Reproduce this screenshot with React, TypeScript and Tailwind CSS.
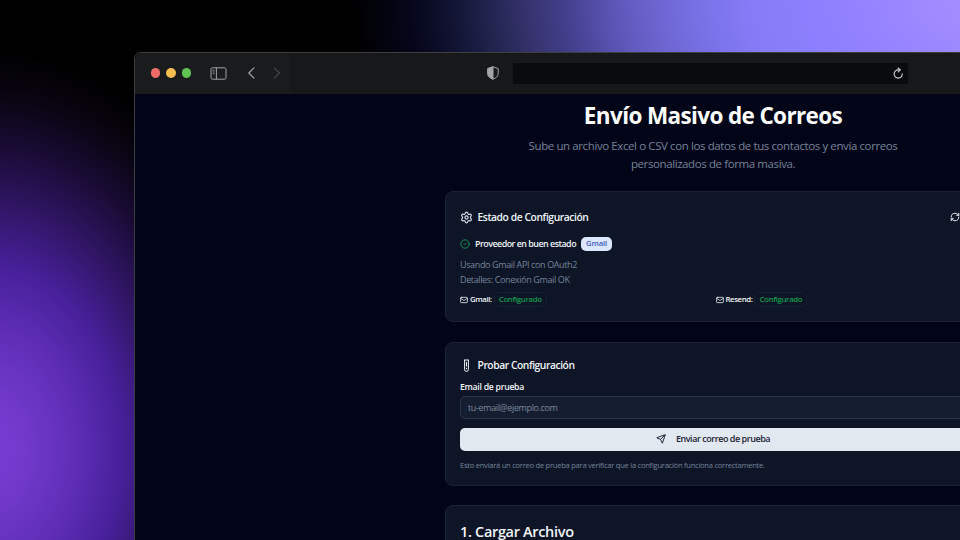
import { Settings, CircleCheck, Mail, Send, RefreshCw } from "lucide-react";
import type { ReactNode } from "react";

function Toolbar() {
  return (
    <header className="flex h-[41px] shrink-0 items-center bg-[#161819] pb-[1px] text-[#a3a6a8]">
      <div className="-mb-[1px] flex h-[41px] w-[156px] items-center bg-[#191b1d] pb-[1px] pl-[15.500px]">
        <div className="flex gap-[6px]">
          <span className="size-[9.500px] rounded-full bg-[#ed6a66]" />
          <span className="size-[9.500px] rounded-full bg-[#f5be50]" />
          <span className="size-[9.500px] rounded-full bg-[#61c454]" />
        </div>
        <svg className="ml-[19px]" width="17" height="13" viewBox="0 0 17 13" fill="none" stroke="currentColor">
          <rect x="1" y="0.8" width="15" height="11.4" rx="1.6" />
          <path d="M6.4 1v11" />
          <path d="M2.6 3.2h2M2.6 5h2M2.6 6.8h2" strokeWidth="0.8" />
        </svg>
        <svg className="ml-[19.500px]" width="9" height="12" viewBox="0 0 9 12" fill="none" stroke="currentColor" strokeWidth="1.2" strokeLinecap="round" strokeLinejoin="round">
          <path d="M7 .8 1.800 6 7 11.200" />
        </svg>
        <svg className="ml-[17px] text-[#46494b]" width="9" height="12" viewBox="0 0 9 12" fill="none" stroke="currentColor" strokeWidth="1.2" strokeLinecap="round" strokeLinejoin="round">
          <path d="m1.200.8 5.200 5.200-5.200 5.200" />
        </svg>
      </div>
      <svg className="ml-[196px]" width="12" height="14" viewBox="0 0 12 14" fill="none" stroke="currentColor">
        <path d="M6 .8 11.200 2.600v4.800c0 3-2.300 4.600-5.200 5.800C3.100 12 .8 10.400.8 7.400V2.600Z" />
        <path d="M6 .8v12.400C3.100 12 .8 10.400.8 7.400V2.600Z" fill="currentColor" />
      </svg>
      <div className="ml-[14px] flex h-[21px] w-[395px] items-center justify-end bg-[#090b0c] pr-[4px] text-[#d0d2d3]">
        <svg width="12" height="12" viewBox="0 0 12 12" fill="none" stroke="currentColor" strokeWidth="1.1" strokeLinecap="round" strokeLinejoin="round">
          <path d="M10.300 6.800A4.100 4.100 0 1 1 6.500 2.900h1.600" />
          <path d="M6.200 1 8.200 2.900 6.200 4.900" />
        </svg>
      </div>
    </header>
  );
}

function Card({ className, children }: { className: string; children: ReactNode }) {
  return (
    <section className={`w-[536px] shrink-0 rounded-[8px] border border-[#1b2436] bg-[#0d1526] px-[14px] ${className}`}>
      {children}
    </section>
  );
}

function ProviderStatus({ name }: { name: string }) {
  return (
    <div className="flex w-[255.500px] shrink-0 items-center">
      <Mail size={8} strokeWidth={2.300} />
      <span className="ml-[2px] text-[7.800px] font-semibold tracking-[-0.400px] whitespace-nowrap">{name}</span>
      <span className="ml-[2px] flex h-[15px] w-[53px] items-center justify-center rounded-[5px] border border-[#152033] text-[7.800px] font-semibold tracking-[-0.330px] text-[#139b4c]">
        Configurado
      </span>
    </div>
  );
}

export default function App() {
  return (
    <div className="h-[540px] w-[960px] overflow-hidden bg-black bg-[radial-gradient(ellipse_285px_400px_at_-10px_450px,#783ed4_0%,#7139ca_13%,#5e2eb6_30%,#47209a_46%,#2f1562_62%,#190b34_76%,#0a0513_88%,transparent_100%),radial-gradient(ellipse_650px_400px_at_1000px_0px,#a78fff_0%,#a08aff_10%,#8f80ff_26%,#877cf8_38%,#7670e4_47%,#6b63cc_54%,#5c54b4_60%,#433f8c_67%,#35326c_73%,#20234c_79%,#101230_85%,#05061a_91%,transparent_100%)] pt-[52px] pl-[134px] font-['Open_Sans','Noto_Sans',sans-serif] text-[#f1f5f9]">
      <div className="flex h-[700px] w-[1158px] flex-col overflow-hidden rounded-[7px] border border-[#3c3e41] bg-[#020518]">
        <Toolbar />
        <main className="flex flex-col items-center">
          <h1 className="mt-[7px] text-[22.500px] leading-[30px] font-bold tracking-[-0.630px] whitespace-nowrap text-white">Envío Masivo de Correos</h1>
          <p className="mt-[6px] w-[400px] text-center text-[11.500px] leading-[17.500px] tracking-[-0.400px] text-[#77839a]">
            Sube un archivo Excel o CSV con los datos de tus contactos y envía correos<br />personalizados de forma masiva.
          </p>
          <Card className="mt-[19px] h-[131px]">
            <div className="mt-[18px] flex h-[14px] items-center">
              <Settings size={13} className="text-[#dfe5ef]" />
              <h2 className="mt-[1px] ml-[4.500px] text-[10.300px] font-semibold tracking-[-0.420px]">Estado de Configuración</h2>
              <RefreshCw size={10} strokeWidth={2.300} className="mr-[6px] ml-auto" />
            </div>
            <div className="mt-[12px] flex h-[15px] items-center">
              <CircleCheck size={10} className="text-[#18a957]" />
              <span className="ml-[5px] text-[8.900px] font-semibold tracking-[-0.500px] whitespace-nowrap">Proveedor en buen estado</span>
              <span className="ml-[5px] flex h-[14px] w-[31px] items-center justify-center rounded-[5px] bg-[#dbe7fd] text-[7.700px] font-semibold tracking-[-0.150px] text-[#455bc3]">Gmail</span>
            </div>
            <div className="mt-[5.500px] text-[9px] leading-[15px] tracking-[-0.370px] text-[#77849b]">
              <p>Usando Gmail API con OAuth2</p>
              <p>Detalles: Conexión Gmail OK</p>
            </div>
            <div className="mt-[5.500px] flex">
              <ProviderStatus name="Gmail:" />
              <ProviderStatus name="Resend:" />
            </div>
          </Card>
          <Card className="mt-[20px] h-[144px]">
            <div className="mt-[15px] flex h-[14px] items-center">
              <svg width="13" height="13" viewBox="0 0 13 13" fill="none" stroke="currentColor">
                <path d="M4 1h5M4.600 1v9.500a1.900 1.900 0 0 0 3.800 0V1" />
                <path d="M6.500 3v4.500M6.500 8.800v1.500" />
              </svg>
              <h2 className="mt-[1px] ml-[4.500px] text-[10.300px] font-semibold tracking-[-0.450px]">Probar Configuración</h2>
            </div>
            <label className="mt-[8.500px] block text-[8.700px] leading-[13px] font-semibold tracking-[-0.270px]">Email de prueba</label>
            <div className="mt-[2px] flex h-[23px] items-center rounded-[5px] border border-[#2a3547] bg-[#151e31] pt-[1px] pl-[7px] text-[9px] tracking-[-0.370px] text-[#7c889c]">tu-email@ejemplo.com</div>
            <button className="mt-[9px] flex h-[23px] w-full items-center justify-center rounded-[5px] bg-[#e2e8f0] text-[9px] font-semibold tracking-[-0.450px] text-[#1b2335]">
              <Send size={10} strokeWidth={2.300} className="mr-[10px]" />
              <span>Enviar correo de prueba</span>
            </button>
            <p className="mt-[8.500px] text-[7.600px] leading-[12px] tracking-[-0.270px] whitespace-nowrap text-[#77849b]">Esto enviará un correo de prueba para verificar que la configuración funciona correctamente.</p>
          </Card>
          <Card className="mt-[19px] h-[160px]">
            <h2 className="mt-[16px] text-[14.500px] leading-[20px] font-semibold tracking-[-0.330px]">1. Cargar Archivo</h2>
          </Card>
        </main>
      </div>
    </div>
  );
}
